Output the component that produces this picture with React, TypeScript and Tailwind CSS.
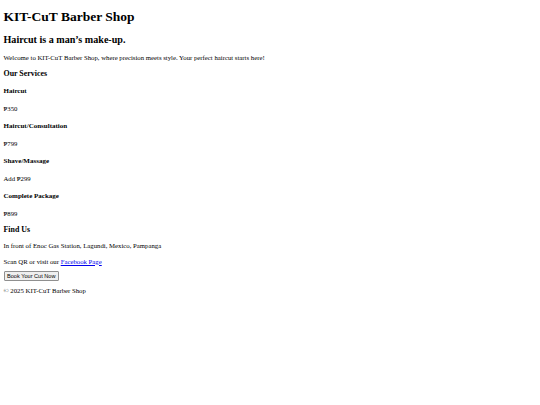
import React from "react";

interface ServiceType {
  name: string;
  price: string;
}

const services: ServiceType[] = [
  { name: "Haircut", price: "₱350" },
  { name: "Haircut/Consultation", price: "₱799" },
  { name: "Shave/Massage", price: "Add ₱299" },
  { name: "Complete Package", price: "₱899" },
];

const App: React.FC = () => {
  return (
    <div className="min-h-[405px] bg-white px-[3.5px] pt-px pb-[3.5px] text-black font-['Liberation_Serif','Times_New_Roman',serif]">
      <header>
        <h1 className="mt-[7.75px] mb-[9.5px] text-[13.5px] font-bold leading-[15.5px]">KIT-CuT Barber Shop</h1>
        <h2 className="my-[8px] text-[10.1px] font-bold leading-[12px]">Haircut is a man’s make-up.</h2>
      </header>
      <p className="my-[7px] text-[6.75px] leading-[8.5px]">
        Welcome to KIT-CuT Barber Shop, where precision meets style. Your perfect haircut starts here!
      </p>

      <section>
        <h3 className="my-[8px] text-[7.9px] font-bold leading-[8px]">Our Services</h3>
        {services.map((service, index) => (
          <div key={index}>
            <h4 className="my-[9px] text-[7px] font-bold leading-[8.5px]">{service.name}</h4>
            <p className="my-[7px] text-[6.75px] leading-[8.5px]">{service.price}</p>
          </div>
        ))}
      </section>

      <section>
        <h3 className="my-[8px] text-[7.9px] font-bold leading-[8px]">Find Us</h3>
        <p className="my-[7px] text-[6.75px] leading-[8.5px]">In front of Enoc Gas Station, Lagundi, Mexico, Pampanga</p>
        <p className="mt-[7px] mb-[5px] text-[6.75px] leading-[8.5px]">
          Scan QR or visit our{" "}
          <a href="#" className="text-[#0000ee] underline">
            Facebook Page
          </a>
        </p>
        <div className="flex">
          <button
            type="button"
            className="border border-[#8f8f8f] rounded-[1px] bg-[#efefef] px-[2.5px] py-[0.5px] text-[5.6px] leading-[6.5px] text-black font-['Liberation_Sans',Arial,sans-serif]"
          >
            Book Your Cut Now
          </button>
        </div>
      </section>

      <footer>
        <p className="my-[6px] text-[6.75px] leading-[8.5px]">© 2025 KIT-CuT Barber Shop</p>
      </footer>
    </div>
  );
};

export default App;
